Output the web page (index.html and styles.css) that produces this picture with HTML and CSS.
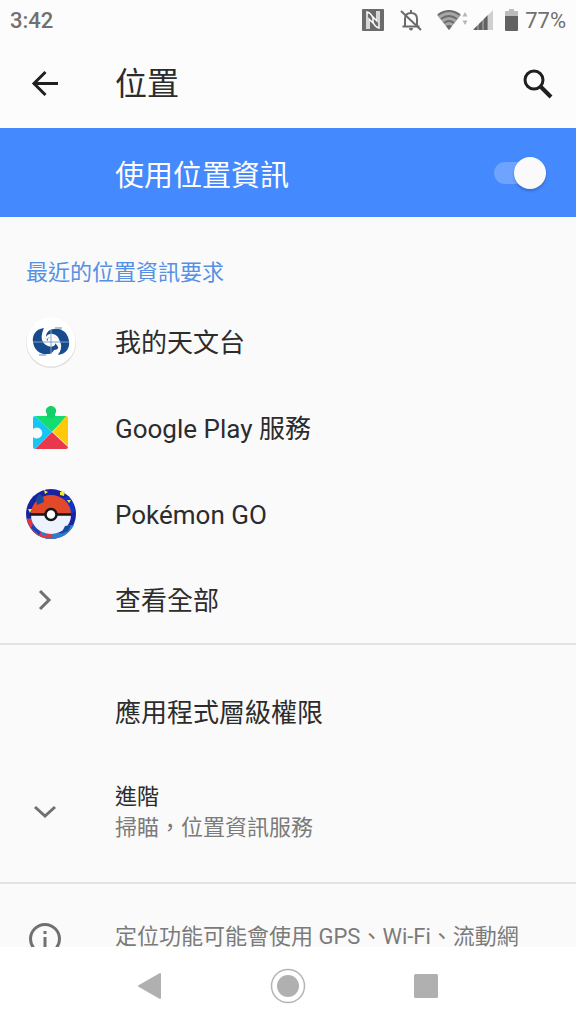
FILE: index.html
```html
<!DOCTYPE html>
<html lang="zh-Hant-HK">
<head>
<meta charset="utf-8">
<meta name="viewport" content="width=device-width, initial-scale=1">
<title>位置</title>
<link rel="stylesheet" href="styles.css">
</head>
<body>
<div class="screen">
  <div class="status">
    <span class="clock">3:42</span>
    <div class="status-icons">
      <svg width="24" height="24" viewBox="0 0 24 24" aria-hidden="true"><rect x="1" y="1" width="22" height="22" rx="1" fill="#6b6b6b"/><path d="M6 21V4q4 1 6 6v5L8 11v10M18 3v17q-4-1-6-6V9l4 4V3" fill="none" stroke="#fcfcfc" stroke-width="1.500"/></svg>
      <svg class="bell" width="24" height="24" viewBox="0 0 24 24" aria-hidden="true"><g fill="none" stroke="#6b6b6b" stroke-width="2"><path d="M6 18V11q0-6 6-6t6 6v7M3.500 18.500h17M12 5V2"/><path d="M2 3l20 19"/></g><path d="M10 20h4q0 2.500-2 2.500T10 20z" fill="#6b6b6b"/></svg>
      <svg class="wifi" width="32" height="24" viewBox="0 0 32 24" aria-hidden="true"><path d="M0 7Q12-2 24 7L12 22z" fill="#a6a6a6"/><g fill="none" stroke="#6b6b6b" stroke-width="2"><path d="M1 7Q12-1 23 7M4 11q8-6 16 0M7 15q5-4 10 0"/></g><path d="M9 18q3-2 6 0l-3 4z" fill="#6b6b6b"/><path d="M25.500 8.500L28 4l2.500 4.500zM25.500 12.500h5L28 17z" fill="#b5b5b5"/></svg>
      <svg class="signal" width="20" height="20" viewBox="0 0 20 20" aria-hidden="true"><path d="M0 20L20 0v20z" fill="#cfcfcf"/><path d="M0 20L15 5v15z" fill="#8c8c8c"/><path d="M1 20v-1l3-3v4zM6 20v-6l3-3v9zM11 20V9l3-3v14z" fill="#626262"/></svg>
      <svg class="battery" width="13" height="22" viewBox="0 0 13 22" aria-hidden="true"><path d="M4 0h5v2h3q1 0 1 1v5H0V3q0-1 1-1h3z" fill="#bcbcbc"/><path d="M0 7h13v14q0 1-1 1H1q-1 0-1-1z" fill="#626262"/></svg>
      <span class="percent">77%</span>
    </div>
  </div>

  <header class="appbar">
    <button class="icon-button lead" type="button" aria-label="返回"><svg width="28" height="28" viewBox="0 0 28 28"><path d="M27 13.500H2M14.500 2L3 13.500 14.500 25" fill="none" stroke="#202020" stroke-width="3"/></svg></button>
    <h1 class="title">位置</h1>
    <button class="icon-button search" type="button" aria-label="搜尋"><svg width="32" height="32" viewBox="0 0 32 32"><circle cx="12" cy="12" r="9" fill="none" stroke="#202020" stroke-width="3"/><path d="M18.500 18.500L29 29" stroke="#202020" stroke-width="4"/></svg></button>
  </header>

  <label class="master" for="use-location">
    <span class="master-text">使用位置資訊</span>
    <input class="switch" id="use-location" type="checkbox" role="switch" checked>
  </label>

  <main class="content">
    <section class="group">
      <h2 class="group-title">最近的位置資訊要求</h2>
      <a class="row" href="#observatory">
        <span class="lead"><svg class="app-icon" width="54" height="54" viewBox="0 0 54 54"><circle cx="27" cy="28" r="25" fill="#dedede"/><circle cx="27" cy="27" r="24.500" fill="#fff"/><path d="M20 13C11 14 8 21 9 27c1 8 7 13 15 12 3 0 5-2 6-4 4 0 6-3 6-7 0-3-4-6-9-6-3 0-4 2-4 3-4-3-5-7-3-12z" fill="#174b8c"/><path d="M34 40c9-1 12-8 11-14-1-8-7-13-15-12-5 0-8 4-8 8 1-2 4-4 7-3 8 2 9 12 5 21z" fill="#174b8c"/><path d="M20 13c-4 9-3 15 4 18 5 2 8-1 7-3 3 3 5 6 3 12 6-8 3-16-4-18-4-1-7 1-6 4-4-3-5-8-4-13z" fill="#fff"/><path d="M9 27h36M27 15v24" stroke="#7fa2c6" stroke-width="1"/><path d="M31 13h7M15 40h7" stroke="#a8c4de" stroke-width="2"/></svg></span>
        <span class="row-text">我的天文台</span>
      </a>
      <a class="row" href="#play-services">
        <span class="lead"><svg class="app-icon" width="54" height="54" viewBox="0 0 54 54"><path d="M11 15h32L28 31z" fill="#13dc70"/><path d="M23 17v-4a5 5 0 1 1 8 0v4z" fill="#13cf68"/><path d="M42 15q2 0 2 2v28L29 31z" fill="#ffc90a"/><path d="M44 46q0 2-2 2H11L28 31z" fill="#e8394a"/><path d="M11 15L28 31 11 48q-2 0-2-2V36a5.500 5.500 0 1 0 0-8V17q0-2 2-2z" fill="#15c5f3"/></svg></span>
        <span class="row-text">Google Play 服務</span>
      </a>
      <a class="row" href="#pokemon-go">
        <span class="lead"><svg class="app-icon" width="54" height="54" viewBox="0 0 54 54"><circle cx="27" cy="27" r="25" fill="#1922a0"/><path d="M3 32l5-1 4 8 8 7 7-1 10 1 8-8 5 0c-5 9-13 14-23 14C15 52 6 44 3 32z" fill="#2b7fc9"/><path d="M3 31l5 2 1 6 7 4 2 6 9-3 2 5C15 53 5 44 3 31z" fill="#e8323d"/><path d="M9 37l8 7-2 4-8-7z" fill="#1646b8"/><path d="M43 9l6 7 2 9-5 2-2-10-7-5z" fill="#0e36cf"/><path d="M7 27a20 19 0 0 1 40 0z" fill="#e2492b"/><path d="M7 28h40a20 19 0 0 1-40 0z" fill="#edf2ff"/><path d="M6 27.500h41" stroke="#171717" stroke-width="2.500"/><circle cx="27" cy="27.500" r="5.500" fill="#fff" stroke="#171717" stroke-width="2.500"/><path d="M12 12l3-5 4 2 1 6-7 3z" fill="#174b99"/><path d="M41 39l6-1-3 6-7 3z" fill="#164c99"/><g fill="#efe83b"><path d="M20 3l4 2-3 2zM36 5l5-1-1 5-4-1zM43 13l4 0-2 3zM4 22l4 0-2 4z"/></g></svg></span>
        <span class="row-text">Pokémon GO</span>
      </a>
      <a class="row" href="#all">
        <span class="lead"><svg width="24" height="24" viewBox="0 0 24 24"><path d="M7 3l9 9-9 9" fill="none" stroke="#707070" stroke-width="3"/></svg></span>
        <span class="row-text">查看全部</span>
      </a>
    </section>

    <section class="group padded">
      <a class="row" href="#permissions">
        <span class="lead"></span>
        <span class="row-text">應用程式層級權限</span>
      </a>
      <button class="row tall" type="button" aria-expanded="false">
        <span class="lead"><svg width="24" height="24" viewBox="0 0 24 24"><path d="M2 7l10 9 10-9" fill="none" stroke="#707070" stroke-width="3"/></svg></span>
        <span class="stack"><span class="subtitle">進階</span><span class="summary">掃瞄，位置資訊服務</span></span>
      </button>
    </section>

    <section class="footer-note">
      <span class="lead"><svg width="34" height="34" viewBox="0 0 34 34" aria-hidden="true"><circle cx="17" cy="18" r="14.500" fill="none" stroke="#707070" stroke-width="3"/><path d="M17 10v3M17 16v10" stroke="#707070" stroke-width="3"/></svg></span>
      <p class="summary">定位功能可能會使用 GPS、Wi-Fi、流動網</p>
    </section>
  </main>

  <nav class="navbar" aria-label="系統導覽">
    <button class="icon-button" type="button" aria-label="返回"><svg width="36" height="36" viewBox="0 0 36 36"><path d="M28 6v24L7 18z" fill="#b0b0b0" stroke="#b0b0b0" stroke-width="2" stroke-linejoin="round"/></svg></button>
    <button class="icon-button" type="button" aria-label="主畫面"><svg width="36" height="36" viewBox="0 0 36 36"><circle cx="18" cy="18" r="16.500" fill="none" stroke="#b5b5b5" stroke-width="1.500"/><circle cx="18" cy="18" r="11" fill="#b0b0b0"/></svg></button>
    <button class="icon-button" type="button" aria-label="最近使用"><svg width="36" height="36" viewBox="0 0 36 36"><rect x="6" y="6" width="24" height="24" rx="1.500" fill="#b0b0b0"/></svg></button>
  </nav>
</div>
</body>
</html>
```
FILE: styles.css
```css
* { box-sizing: border-box; }

body {
  margin: 0;
  background: #fafafa;
  color: #2c2c2c;
  font-family: Roboto, "Noto Sans CJK TC", sans-serif;
  font-size: 26px;
}

h1, h2, p { margin: 0; font-weight: 400; }
svg { display: block; flex: none; }
button { border: 0; background: none; color: inherit; font: inherit; }

.screen {
  display: flex;
  flex-direction: column;
  height: 100vh;
  overflow: hidden;
}

.status {
  display: flex;
  flex: none;
  align-items: center;
  justify-content: space-between;
  height: 40px;
  padding: 0 10px;
  background: #fcfcfc;
  color: #707070;
  font-size: 22px;
}
.clock { font-weight: 500; }
.status-icons { display: flex; align-items: center; }
.bell { margin-left: 14px; }
.wifi { margin-left: 14px; }
.signal { margin-left: 4px; }
.battery { margin-left: 12px; }
.percent { margin-left: 7px; }

.appbar {
  display: flex;
  flex: none;
  align-items: center;
  height: 88px;
  padding: 0 22px 0 26px;
  background: #fcfcfc;
}
.icon-button {
  display: flex;
  align-items: center;
  justify-content: center;
  padding: 0;
}
.lead {
  display: flex;
  flex: none;
  justify-content: center;
  width: 38px;
  margin-right: 51px;
}
.title { flex: 1; font-size: 32px; line-height: 46px; }

.master {
  display: flex;
  flex: none;
  align-items: center;
  justify-content: space-between;
  height: 89px;
  padding: 0 30px 0 115px;
  background: #4489fd;
  color: #fff;
  font-size: 29px;
}
.switch {
  position: relative;
  appearance: none;
  width: 52px;
  height: 34px;
  margin: 0;
}
.switch::before {
  content: "";
  position: absolute;
  inset: 6px 4px 6px 0;
  border-radius: 12px;
  background: #6ea4ff;
}
.switch::after {
  content: "";
  position: absolute;
  top: 1px;
  right: 0;
  width: 32px;
  height: 32px;
  border-radius: 50%;
  background: #fafafa;
  box-shadow: 0 2px 3px #0003;
}
.switch:not(:checked)::after { right: 20px; }

.content { flex: 1; min-height: 0; overflow: hidden; }
.group { border-bottom: 2px solid #e2e2e2; }
.padded { padding: 24px 0 13px; }
.group-title {
  padding: 40px 26px 10px;
  color: #5590e4;
  font-size: 22px;
  line-height: 32px;
}
.row {
  display: flex;
  align-items: center;
  width: 100%;
  height: 86px;
  padding: 0 26px;
  color: inherit;
  text-align: left;
  text-decoration: none;
}
.row-text { padding-top: 2px; line-height: 36px; }
.tall { height: 114px; }
.app-icon { margin: 0 -8px 0 4px; }
.stack { display: flex; flex-direction: column; }
.subtitle, .summary { font-size: 22px; line-height: 31px; }
.summary { color: #7b7b7b; }

.footer-note {
  display: flex;
  align-items: flex-start;
  padding: 37px 26px;
}

.navbar {
  display: flex;
  flex: none;
  align-items: center;
  justify-content: center;
  gap: 102px;
  height: 77px;
  background: #fff;
}
```
